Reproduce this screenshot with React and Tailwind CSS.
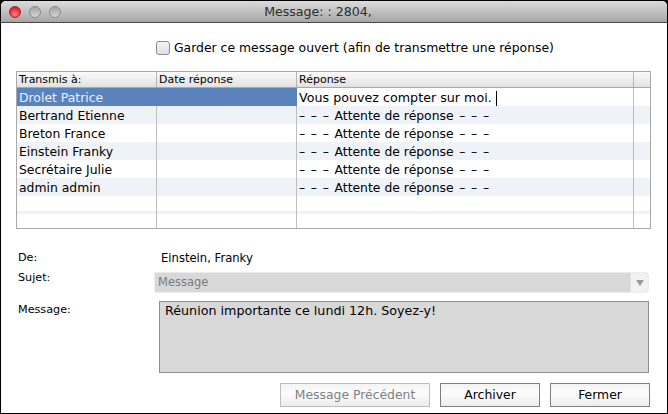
import React from 'react'

const font = "font-['DejaVu_Sans','Liberation_Sans',sans-serif]"

const rows = [
  { name: 'Drolet Patrice', reply: 'Vous pouvez compter sur moi.', selected: true },
  { name: 'Bertrand Etienne', stripe: true },
  { name: 'Breton France' },
  { name: 'Einstein Franky', stripe: true },
  { name: 'Secrétaire Julie' },
  { name: 'admin admin', stripe: true },
]

const TrafficLight = ({ red }) => (
  <span
    className={
      red
        ? 'w-3 h-3 rounded-full border border-[#a8262c] bg-[radial-gradient(circle_at_50%_70%,#ff8d8d,#e8283a_60%,#b5121f)]'
        : 'w-3 h-3 rounded-full border border-[#8a8a8a] bg-[linear-gradient(#a2a2a2,#d6d6d6)]'
    }
  />
)

const Waiting = () => (
  <>
    <span className="[word-spacing:1.7px]">– – – </span>
    Attente de réponse
    <span className="[word-spacing:1.7px]"> – – –</span>
  </>
)

const Row = ({ row }) => (
  <div className={`flex h-[18px] text-[12.4px] leading-[20px] ${row.stripe ? 'bg-[#eff3f8]' : 'bg-white'}`}>
    <div className={`w-[140px] pl-[2px] whitespace-nowrap border-r border-[#bdbdbd] ${row.selected ? 'bg-[#5a82bd] text-[#e8eef8] border-r-[#5a82bd]' : 'text-black'}`}>
      {row.name}
    </div>
    <div className={`w-[140px] border-r border-[#bdbdbd] ${row.selected ? 'bg-[#5a82bd] border-r-[#5a82bd]' : ''}`} />
    <div className="w-[337px] pl-[2px] whitespace-nowrap border-r border-[#bdbdbd] text-black">
      {row.selected ? (
        <span className="flex items-center text-[12.7px]">
          {row.reply}
          <span className="ml-[4px] w-px h-[15px] bg-black" />
        </span>
      ) : row.name ? (
        <Waiting />
      ) : null}
    </div>
    <div className="flex-1" />
  </div>
)

const Button = ({ children, disabled, className }) => (
  <button
    className={`h-[24px] text-[12.4px] bg-[linear-gradient(#f4f4f4,#fcfcfc_45%,#ececec)] border ${
      disabled ? 'border-[#bdbdbd] text-[#808080]' : 'border-[#7f7f7f] text-black'
    } ${className}`}
  >
    {children}
  </button>
)

export default function App() {
  return (
    <div className={`w-[668px] h-[414px] pt-px bg-black ${font}`}>
      <div className="flex flex-col w-[666px] h-[412px] ml-px bg-white rounded-t-[5px] overflow-hidden">
        <div className="relative flex items-center shrink-0 h-[22px] pl-[8px] gap-2 border-b border-[#4a4a4a] bg-[linear-gradient(#dcdcdc,#a6a6a6)]">
          <TrafficLight red />
          <TrafficLight />
          <TrafficLight />
          <span className="absolute inset-0 pr-[32px] text-center text-[12.6px] leading-[22px] text-[#2c2c2c]">Message: : 2804,</span>
        </div>

        <div className="flex items-center mt-[17px] ml-[155px] gap-[4px] text-[12.4px] leading-[15px] text-black">
          <span className="w-[14px] h-[14px] rounded-[3px] border border-[#8c8c8c] bg-[linear-gradient(#f4f4f4,#e0e0e0)]" />
          <span className="whitespace-nowrap">Garder ce message ouvert (afin de transmettre une réponse)</span>
        </div>

        <div className="flex flex-col w-[635px] h-[158px] mt-[16px] ml-[15px] border border-[#a8a8a8] overflow-hidden">
          <div className="flex shrink-0 h-[16px] text-[11px] leading-[15px] text-black border-b border-[#a8a8a8] bg-[linear-gradient(#fafafa,#e2e2e2)]">
            <div className="w-[140px] pl-[2px] border-r border-[#b5b5b5]">Transmis à:</div>
            <div className="w-[140px] pl-[2px] border-r border-[#b5b5b5]">Date réponse</div>
            <div className="w-[337px] pl-[2px] border-r border-[#b5b5b5]">Réponse</div>
          </div>
          {rows.map((row) => (
            <Row key={row.name} row={row} />
          ))}
          <Row row={{ name: '' }} />
          <div className="h-[3px] shrink-0">
            <Row row={{ name: '', stripe: true }} />
          </div>
          <Row row={{ name: '' }} />
        </div>

        <div className="flex items-center mt-[20px] ml-[17px] leading-[18px] text-black">
          <span className="w-[143px] text-[11.2px]">De:</span>
          <span className="text-[11.6px]">Einstein, Franky</span>
        </div>

        <div className="flex mt-[5px] ml-[17px] leading-[18px]">
          <span className="w-[136px] -mt-[3px] text-[11.2px] text-black">Sujet:</span>
          <div className="flex w-[495px] h-[21px] rounded-r-[4px] rounded-l-[2px] border border-[#ececec] bg-[#d8d8d8]">
            <span className="flex-1 pl-[3px] text-[11.5px] leading-[19px] text-[#7c7c7c]">Message</span>
            <div className="flex items-center justify-center w-[18px] rounded-r-[4px] bg-[#f2f2f2] border-l border-[#e2e2e2]">
              <svg width="8" height="6" viewBox="0 0 8 6"><path d="M0 0h8L4 6z" fill="#9a9a9a" /></svg>
            </div>
          </div>
        </div>

        <div className="flex mt-[8px] ml-[17px] leading-[18px] text-black">
          <span className="w-[141px] text-[11.2px]">Message:</span>
          <div className="w-[490px] h-[72px] pl-[5px] text-[12.7px] border border-[#8f8f8f] bg-[#d8d8d8]">Réunion importante ce lundi 12h. Soyez-y!</div>
        </div>

        <div className="flex justify-end gap-[10px] mt-[10px] mr-[17px]">
          <Button disabled className="w-[150px]">Message Précédent</Button>
          <Button className="w-[100px]">Archiver</Button>
          <Button className="w-[100px]">Fermer</Button>
        </div>
      </div>
    </div>
  )
}
